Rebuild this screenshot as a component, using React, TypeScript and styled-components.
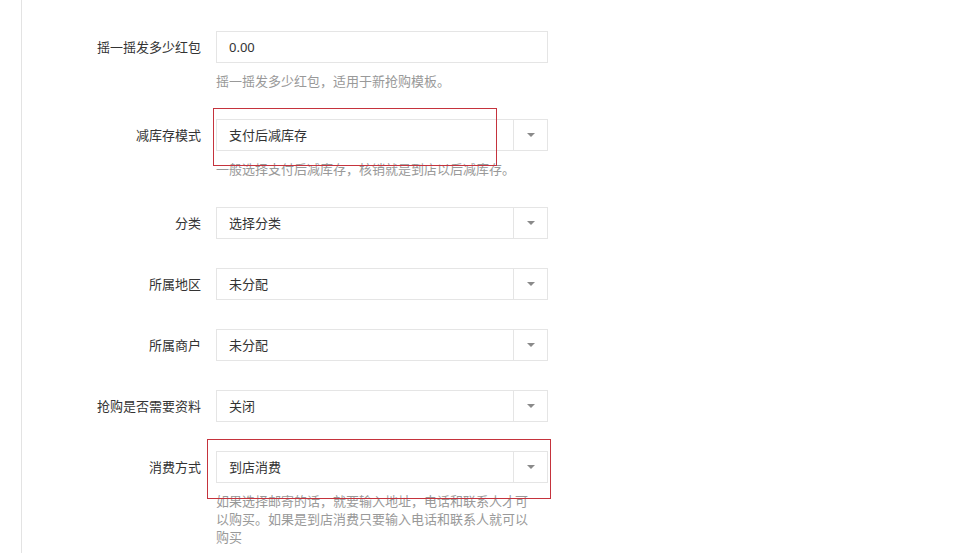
import React from 'react'
import styled, { createGlobalStyle } from 'styled-components'

const GlobalStyle = createGlobalStyle`
  html, body {
    margin: 0;
    padding: 0;
    background: #fff;
  }
  body {
    font-family: "Noto Sans", "Noto Sans CJK SC", sans-serif;
    font-size: 13px;
    color: #333;
  }
`

const Page = styled.div`
  margin-left: 21px;
  border-left: 1px solid #e3e3e3;
  min-height: 553px;
  box-sizing: border-box;
  padding-top: 31px;
  overflow: hidden;
`

const Field = styled.div`
  display: grid;
  grid-template-columns: 179px 332px;
  column-gap: 15px;
  margin-bottom: 29px;
`

const Label = styled.label`
  grid-column: 1;
  text-align: right;
  line-height: 32px;
  height: 32px;
  color: #333;
  white-space: nowrap;
`

const Control = styled.div`
  grid-column: 2;
  position: relative;
`

const Input = styled.div`
  box-sizing: border-box;
  height: 32px;
  border: 1px solid #e5e5e5;
  padding: 0 12px;
  line-height: 30px;
  color: #333;
  background: #fff;
`

const Select = styled.div`
  box-sizing: border-box;
  height: 32px;
  border: 1px solid #e5e5e5;
  display: flex;
  background: #fff;
`

const SelectValue = styled.span`
  flex: 1;
  padding: 0 12px;
  line-height: 30px;
  color: #333;
`

const Caret = styled.span`
  width: 33px;
  border-left: 1px solid #e5e5e5;
  display: flex;
  align-items: center;
  justify-content: center;

  &::after {
    content: '';
    border-left: 4px solid transparent;
    border-right: 4px solid transparent;
    border-top: 4px solid #8a8a8a;
  }
`

const Help = styled.p`
  grid-column: 2;
  margin: 9px 0 0;
  width: 322px;
  line-height: 18px;
  color: #999;
`

const Mark = styled.div<{ $left: number; $top: number; $width: number; $height: number }>`
  position: absolute;
  left: ${p => p.$left}px;
  top: ${p => p.$top}px;
  width: ${p => p.$width}px;
  height: ${p => p.$height}px;
  border: 1px solid #c5333d;
  box-sizing: border-box;
  pointer-events: none;
`

interface DropdownProps {
  value: string
}

const Dropdown: React.FC<DropdownProps> = ({ value }) => (
  <Select>
    <SelectValue>{value}</SelectValue>
    <Caret />
  </Select>
)

const App: React.FC = () => {
  return (
    <>
      <GlobalStyle />
      <Page>
        <Field>
          <Label>摇一摇发多少红包</Label>
          <Control>
            <Input>0.00</Input>
          </Control>
          <Help>摇一摇发多少红包，适用于新抢购模板。</Help>
        </Field>

        <Field>
          <Label>减库存模式</Label>
          <Control>
            <Dropdown value="支付后减库存" />
            <Mark $left={-3} $top={-11} $width={284} $height={58} />
          </Control>
          <Help>一般选择支付后减库存，核销就是到店以后减库存。</Help>
        </Field>

        <Field>
          <Label>分类</Label>
          <Control>
            <Dropdown value="选择分类" />
          </Control>
        </Field>

        <Field>
          <Label>所属地区</Label>
          <Control>
            <Dropdown value="未分配" />
          </Control>
        </Field>

        <Field>
          <Label>所属商户</Label>
          <Control>
            <Dropdown value="未分配" />
          </Control>
        </Field>

        <Field>
          <Label>抢购是否需要资料</Label>
          <Control>
            <Dropdown value="关闭" />
          </Control>
        </Field>

        <Field>
          <Label>消费方式</Label>
          <Control>
            <Dropdown value="到店消费" />
            <Mark $left={-9} $top={-12} $width={344} $height={60} />
          </Control>
          <Help>如果选择邮寄的话，就要输入地址，电话和联系人才可以购买。如果是到店消费只要输入电话和联系人就可以购买</Help>
        </Field>
      </Page>
    </>
  )
}

export default App
